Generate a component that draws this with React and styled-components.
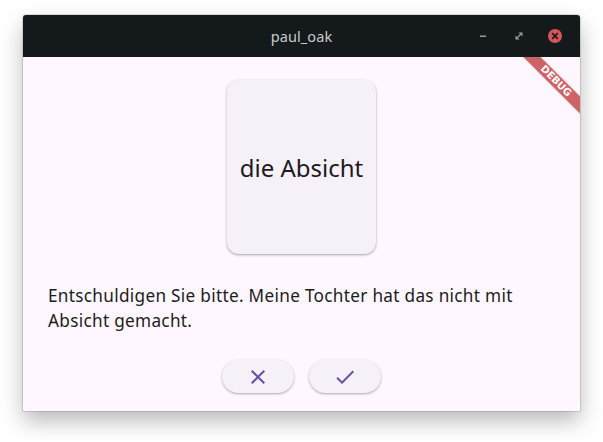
import React from "react";
import styled, { createGlobalStyle } from "styled-components";

const Global = createGlobalStyle`
  html, body { margin: 0; padding: 0; background: #ffffff; }
  body { font-family: "Noto Sans", "Open Sans", sans-serif; }
`;

const Desktop = styled.div`
  width: 603px;
  height: 442px;
  padding: 15px 23px 0 23px;
  box-sizing: border-box;
`;

const Window = styled.div`
  width: 557px;
  height: 396px;
  display: flex;
  flex-direction: column;
  border-radius: 3px 3px 0 0;
  overflow: hidden;
  box-shadow: 0 10px 22px rgba(0, 0, 0, 0.28), 0 0 0 1px rgba(0, 0, 0, 0.12);
`;

const TitleBar = styled.div`
  height: 42px;
  flex: none;
  background: #141a1c;
  display: grid;
  grid-template-columns: 1fr auto 1fr;
  align-items: center;
`;

const Title = styled.div`
  grid-column: 2;
  color: #c9c9c9;
  font-family: "Noto Sans", sans-serif;
  font-size: 14.5px;
  letter-spacing: 0.1px;
`;

const Controls = styled.div`
  grid-column: 3;
  justify-self: end;
  display: flex;
  align-items: center;
  gap: 22px;
  padding-right: 18px;
`;

const CtrlBtn = styled.div`
  width: 14px;
  height: 14px;
  display: flex;
  align-items: center;
  justify-content: center;
  border-radius: 50%;
  background: ${(p) => (p.$close ? "#d9545b" : "transparent")};
`;

const Content = styled.div`
  position: relative;
  flex: 1;
  background: #fef7ff;
  overflow: hidden;
  display: flex;
  flex-direction: column;
  align-items: center;
`;

const Card = styled.div`
  margin-top: 23px;
  width: 149px;
  height: 174px;
  border-radius: 12px;
  background: #f6f1f9;
  box-shadow: 0 1px 2px rgba(0, 0, 0, 0.25), 0 1px 3px 1px rgba(0, 0, 0, 0.08);
  display: flex;
  align-items: center;
  justify-content: center;
  color: #1d1b20;
  font-size: 24px;
`;

const Sentence = styled.p`
  align-self: stretch;
  margin: 29px 25px 0 25px;
  color: #1d1b20;
  font-size: 17.2px;
  line-height: 25px;
  letter-spacing: 0.3px;
`;

const Actions = styled.div`
  margin-top: 27px;
  display: flex;
  gap: 15px;
`;

const Pill = styled.button`
  width: 72px;
  height: 33px;
  border: none;
  border-radius: 17px;
  background: #f6f1f9;
  box-shadow: 0 1px 2px rgba(0, 0, 0, 0.25), 0 1px 3px 1px rgba(0, 0, 0, 0.06);
  display: flex;
  align-items: center;
  justify-content: center;
  padding: 0;
  cursor: pointer;
`;

const BannerAnchor = styled.div`
  position: absolute;
  top: 0;
  right: 0;
  width: 0;
  height: 0;
`;

const Banner = styled.div`
  position: absolute;
  left: -40px;
  top: 28px;
  width: 80px;
  height: 12px;
  transform-origin: 40px -28px;
  transform: rotate(45deg);
  background: rgba(183, 28, 28, 0.68);
  box-shadow: 0 0 2px rgba(0, 0, 0, 0.25);
  color: #fff;
  font-family: "DejaVu Sans", sans-serif;
  font-weight: 900;
  font-size: 10px;
  line-height: 12px;
  text-align: center;
`;

const Icon = ({ d, color = "#6750a4", size = 24 }) => (
  <svg width={size} height={size} viewBox="0 0 24 24">
    <path d={d} fill={color} />
  </svg>
);

const CLOSE = "M19 6.41L17.59 5 12 10.59 6.41 5 5 6.41 10.59 12 5 17.59 6.41 19 12 13.41 17.59 19 19 17.59 13.41 12z";
const CHECK = "M9 16.17L4.83 12l-1.42 1.41L9 19 21 7l-1.41-1.41z";

export default function App() {
  return (
    <>
      <Global />
      <Desktop>
        <Window>
          <TitleBar>
            <Title>paul_oak</Title>
            <Controls>
              <CtrlBtn>
                <svg width="8" height="8" viewBox="0 0 8 8">
                  <rect x="1" y="3.5" width="6" height="1.5" fill="#9a9c9d" />
                </svg>
              </CtrlBtn>
              <CtrlBtn>
                <svg width="8" height="8" viewBox="0 0 8 8">
                  <path d="M3.5 0.5H7.5V4.5Z" fill="#9a9c9d" />
                  <path d="M0.5 3.5V7.5H4.5Z" fill="#9a9c9d" />
                  <path d="M2.5 5.5L5.5 2.5" stroke="#9a9c9d" strokeWidth="1.2" />
                </svg>
              </CtrlBtn>
              <CtrlBtn $close>
                <svg width="8" height="8" viewBox="0 0 8 8">
                  <path d="M1.2 1.2L6.8 6.8M6.8 1.2L1.2 6.8" stroke="#1b1d1f" strokeWidth="1.7" />
                </svg>
              </CtrlBtn>
            </Controls>
          </TitleBar>
          <Content>
            <Card>die Absicht</Card>
            <Sentence>
              Entschuldigen Sie bitte. Meine Tochter hat das nicht mit Absicht gemacht.
            </Sentence>
            <Actions>
              <Pill aria-label="Nein">
                <Icon d={CLOSE} />
              </Pill>
              <Pill aria-label="Ja">
                <Icon d={CHECK} />
              </Pill>
            </Actions>
            <BannerAnchor>
              <Banner>DEBUG</Banner>
            </BannerAnchor>
          </Content>
        </Window>
      </Desktop>
    </>
  );
}
